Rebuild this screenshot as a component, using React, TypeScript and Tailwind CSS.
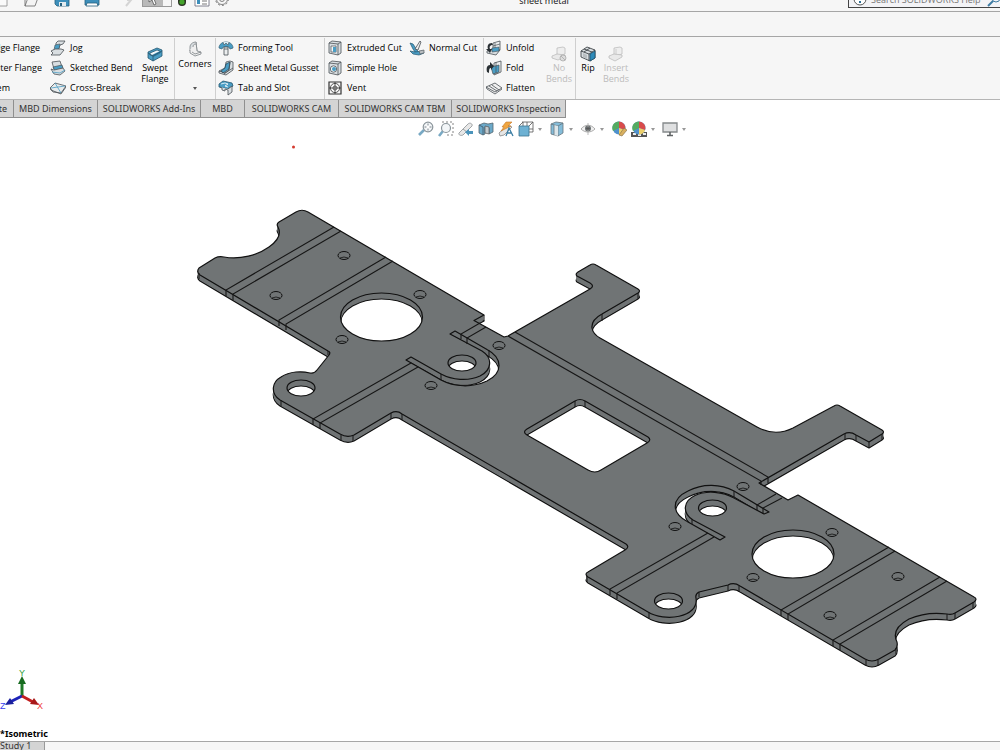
import React from "react";
import clsx from "clsx";

const K = "#4a5156";
const B = "#4a9dc4";
const L = "#d9dee1";
const G = "#b9bec1";

const icons: Record<string, React.ReactNode> = {
  jog: (
    <>
      <path d="M6 3l2-2h7l-2 3-3 1-1 3H5l1-3z" fill={L} stroke={K} />
      <path d="M5 5l5-1-1 5-5 1z" fill={B} stroke={K} strokeWidth=".6" />
      <path d="M1 11l4-2h6l3 1-4 5H1l2-2z" fill={L} stroke={K} />
    </>
  ),
  bend: (
    <>
      <path d="M2 2l8-1 2 6-8 2z" fill={L} stroke={K} />
      <path d="M3 7l9-2 1 3-8 3z" fill={B} stroke={K} strokeWidth=".7" />
      <path d="M1 9l3 1 9-2 2 3-5 4-6-1z" fill={L} stroke={K} />
      <path d="M2 12l8 1 5-3" fill="none" stroke={B} />
    </>
  ),
  cross: (
    <>
      <path d="M0 8l5-5 11 3-5 7-8-1z" fill="#e8ebec" stroke={K} />
      <path d="M1 8l14-2M5 3l6 10" fill="none" stroke={B} strokeWidth=".8" />
      <path d="M0 8l1 2 10 4 5-7V6" fill="none" stroke={K} />
    </>
  ),
  swept: (
    <>
      <path d="M1 6l9-4 5 2v6l-9 5-5-3z" fill={B} stroke="#23556e" />
      <path d="M3 7l7-3 3 1v2l-6 3-4-1z" fill="#f4f8fa" stroke="#23556e" strokeWidth=".8" />
      <path d="M5 9l8-4v2L7 10z" fill="#2f7ea6" />
      <path d="M1 7l5 3 9-5M6 10v5" fill="none" stroke="#23556e" strokeWidth=".8" />
    </>
  ),
  corners: (
    <>
      <path d="M3 6c0-3 3-5 6-5l1 9-4 2-3-2z" fill={L} stroke="#7b8185" />
      <path d="M9 1l1 9 4 1v2l-6 2-5-3v-3" fill="#efefef" stroke="#7b8185" />
      <path d="M6 6c0-2 1-3 3-3M5 11l3 2 6-2" fill="none" stroke="#7b8185" />
    </>
  ),
  forming: (
    <>
      <path d="M1 8c0-8 14-8 14 0l-3 1-1-2H5L4 9z" fill={B} stroke="#3d6a80" />
      <path d="M5 2l1 3 2-2 2 2 1-3" fill="#d9edf6" stroke={K} strokeWidth=".6" />
      <path d="M6 7h4v8H6z" fill="#eceeef" stroke={K} />
      <path d="M6 9h4" stroke={K} />
    </>
  ),
  gusset: (
    <>
      <path d="M8 2l4-1 3 1v8l-7 5-7-2v-2l6-3z" fill={L} stroke={K} />
      <path d="M8 4l4-2-1 7-6 4-2-2 4-3z" fill={B} stroke="#234b60" />
      <path d="M12 2l-1 8-5 4M1 11l6 2 8-5" fill="none" stroke={K} />
    </>
  ),
  tab: (
    <>
      <path d="M1 4l4-3 9 2 1 3-5 3-9-2z" fill={B} stroke="#23556e" />
      <path d="M2 7l2 1v2l3 1V9l3 1v5l4-3V6l-4 3" fill={L} stroke={K} />
      <path d="M3 4l4-1 3 1-3 2 3 1" fill="none" stroke="#fff" />
    </>
  ),
  extruded: (
    <>
      <path d="M2 3l3-2 9 1v11l-3 2-9-2z" fill={L} stroke={K} />
      <path d="M2 3l9 1v11M11 4l3-2" fill="none" stroke={K} />
      <path d="M4 6h5v6H4z" fill="#f3f6f7" stroke={K} strokeWidth=".7" />
      <path d="M6 7h3v5H6z" fill={B} />
    </>
  ),
  hole: (
    <>
      <path d="M2 3l3-2 9 1v11l-3 2-9-2z" fill={L} stroke={K} />
      <path d="M2 3l9 1v11M11 4l3-2" fill="none" stroke={K} />
      <circle cx="6.500" cy="9" r="3.200" fill="#f3f6f7" stroke={K} />
      <circle cx="7" cy="9" r="2" fill={B} />
    </>
  ),
  vent: (
    <>
      <path d="M2 2h12v12H2z" fill="#f8f8f8" stroke="#333" strokeWidth="1.200" />
      <circle cx="8" cy="8" r="4.600" fill="none" stroke="#333" />
      <circle cx="8" cy="8" r="2" fill="none" stroke="#333" strokeWidth=".7" />
      <path d="M8 2v12M2 8h12" stroke="#333" />
    </>
  ),
  normal: (
    <>
      <path d="M1 3l3 1 4 6 2 3-4-1-2-3z" fill={B} stroke="#23556e" strokeWidth=".7" />
      <path d="M1 11l5 1 8-1 1 2-5 2-6-1z" fill={B} stroke="#23556e" strokeWidth=".7" />
      <path d="M6 9l5-8 1 1-3 8z" fill="#eee" stroke={K} />
      <path d="M10 11l5-1v3l-4 1z" fill={G} stroke={K} strokeWidth=".6" />
    </>
  ),
  unfold: (
    <>
      <path d="M7 3l7-2v9l-7 2z" fill="#eceeef" stroke={K} />
      <path d="M9 3v7M7 6l7-2" stroke={K} strokeWidth=".7" />
      <path d="M1 11l5-2 8 1-4 5-9-2z" fill={L} stroke={K} />
      <path d="M6 8l7-1v4l-7 1z" fill={B} stroke={K} strokeWidth=".6" />
      <path d="M6 3C2 3 1 6 2 9H0l4 4 2-4H4c-1-2 0-4 3-4z" fill="#2a3034" />
    </>
  ),
  fold: (
    <>
      <path d="M8 3l7-2v11l-7 3z" fill="#eceeef" stroke={K} />
      <path d="M5 7l8-2v7l-6 2z" fill={B} stroke={K} strokeWidth=".7" />
      <path d="M10 2v12" stroke={K} strokeWidth=".7" />
      <path d="M1 12c-1-4 0-7 3-7V2l4 4-3 4V8c-2 0-2 2-2 5z" fill="#2a3034" />
    </>
  ),
  flatten: (
    <>
      <path d="M0 7l9-4 7 5-7 4z" fill="#efefef" stroke={K} />
      <path d="M3 6l8 5M6 5l7 5M0 7l1 2 8 5 7-5" fill="none" stroke={K} strokeWidth=".8" />
    </>
  ),
  nobends: (
    <>
      <path d="M6 2l6-1 2 1v6l-7 2-1-1z" fill="#eee" stroke="#bdbdbd" />
      <path d="M1 10l5-2 8 1v2l-7 3-6-2z" fill="#e9e9e9" stroke="#bdbdbd" />
      <circle cx="12" cy="12" r="3" fill="#ddd" stroke="#a9a9a9" />
      <path d="M10 10l4 4" stroke="#a9a9a9" />
    </>
  ),
  rip: (
    <>
      <path d="M1 5l6-4 8 3v8l-5 3-9-4z" fill={L} stroke="#2f3437" />
      <path d="M1 5l8 3 6-4M9 8v7M4 3l8 3M4 6l6-4" fill="none" stroke="#2f3437" />
      <path d="M10 8l5-3v7l-5 3z" fill="#2e8bba" stroke="#1d526d" />
      <path d="M3 7l4 2v4l-4-2z" fill={G} />
    </>
  ),
  insert: (
    <>
      <path d="M6 2l6-1 2 1v6l-7 2-1-1z" fill="#eee" stroke="#bdbdbd" />
      <path d="M1 10l5-2 8 1v2l-7 4-6-3z" fill="#e9e9e9" stroke="#bdbdbd" />
      <path d="M8 3v6" stroke="#c4c4c4" />
    </>
  ),
  zoomFit: (
    <>
      <path d="M1 14l5-5" stroke="#78a9c4" strokeWidth="2.600" />
      <circle cx="10" cy="6" r="4.800" fill="#f3f6f8" stroke="#8b959b" strokeWidth="1.200" />
      <path d="M10 2.500v7M6.500 6h7" stroke="#5e6a71" />
      <path d="M8.500 4.500h3v3h-3z" fill="#fff" />
    </>
  ),
  zoomArea: (
    <>
      <path d="M4 1h11v13H9" fill="none" stroke="#666" strokeDasharray="2 2" />
      <path d="M1 15l4-5" stroke="#78a9c4" strokeWidth="2.600" />
      <circle cx="8" cy="7" r="4.500" fill="#f3f6f8" stroke="#8b959b" strokeWidth="1.200" />
    </>
  ),
  previous: (
    <>
      <path d="M1 12l9-9c2-2 5 0 4 2l-9 9c-2 1-5 0-4-2z" fill="#e8e8e8" stroke="#8a8f92" />
      <path d="M5 8l4 3" stroke="#8a8f92" />
      <path d="M7 11l4-3v2h4v3h-4v2z" fill="#4b94bb" />
    </>
  ),
  section: (
    <>
      <path d="M1 4l5-2 4 1 5-1v9l-4 2V7L7 6v7l-2 1-4-2z" fill="#6ba9c9" stroke="#55666f" />
      <path d="M7 5l4 1v7l-4-1z" fill="#c3cbcf" stroke="#555" strokeWidth=".7" />
      <path d="M1 4l4 2v8" fill="none" stroke="#456" />
    </>
  ),
  dynamic: (
    <>
      <path d="M1 12l9-8 4 2-8 8-4 1z" fill="#e6e6e6" stroke="#888" />
      <path d="M8 1h6l-4 4h3L3 10l3-4H4z" fill="#f0a640" stroke="#c67a2e" strokeWidth=".6" />
      <path d="M8 15l3-8 4 8M9 12h4" fill="none" stroke="#3a7da3" strokeWidth="1.300" />
    </>
  ),
  orient: (
    <>
      <path d="M4 1h11v10h-4M1 5l4-4M11 5l4-4M9 1v5M5 1v4M11 8h4" fill="none" stroke="#555" />
      <path d="M1 5h10v10H1z" fill="#6db1d3" stroke="#3d7590" />
    </>
  ),
  display: (
    <>
      <path d="M2 3l5-2 7 1v10l-5 3-7-2z" fill="#84bcd9" stroke="#67747b" />
      <path d="M2 3l7 2 5-3M9 5v10" fill="none" stroke="#67747b" />
      <path d="M5 4v10l4 1V5z" fill="#dde6ea" />
      <path d="M5 4v10" stroke="#67747b" />
    </>
  ),
  eye: (
    <>
      <path d="M1 8c4-5 10-5 14 0-4 4-10 4-14 0z" fill="#f0f0f0" stroke="#999" />
      <circle cx="8" cy="7.500" r="3" fill="#6e7375" />
      <circle cx="8" cy="7.500" r="1.300" fill="#222" />
      <path d="M8 2v12" stroke="#aaa" strokeWidth=".8" />
    </>
  ),
  appearance: (
    <>
      <circle cx="8" cy="7" r="6.500" fill="#4f91cc" />
      <path d="M8 7V.500A6.500 6.500 0 0 1 14 9z" fill="#d94b4b" />
      <path d="M8 7L2 10A6.500 6.500 0 0 1 8 .500z" fill="#53ab61" />
      <path d="M8 7l6 2a6.500 6.500 0 0 1-6 5z" fill="#eed06b" />
      <path d="M8 14l5-7 3 2-5 6z" fill="#d9b060" stroke="#7d6944" strokeWidth=".6" />
    </>
  ),
  scene: (
    <>
      <path d="M0 11h16v5H0z" fill="#555" />
      <path d="M2 12h3v2H2zM7 13h3v2H7zM12 12h3v2h-3z" fill="#eee" />
      <circle cx="8" cy="7" r="6.500" fill="#4f91cc" />
      <path d="M8 7V.500A6.500 6.500 0 0 1 14 9z" fill="#d94b4b" />
      <path d="M8 7L2 10A6.500 6.500 0 0 1 8 .500z" fill="#53ab61" />
      <path d="M8 7l6 2a6.500 6.500 0 0 1-6 4.500z" fill="#eed06b" />
    </>
  ),
  monitor: (
    <>
      <path d="M1 2h14v9H1z" fill="#dfe0e1" stroke="#85898b" strokeWidth="1.300" />
      <path d="M8 11v3M5 14.500h6" stroke="#5f6365" strokeWidth="1.600" />
    </>
  ),
  newDoc: <path d="M1 1h12v14H1z" fill="#fafafa" stroke="#8c8c8c" />,
  open: <path d="M1 15L5 4h10l-4 11zM1 15V3" fill="#f4f4f4" stroke="#666" />,
  save: (
    <>
      <path d="M1 2h14v13H3l-2-2z" fill="#3d8fbb" stroke="#27607e" />
      <path d="M5 11h7v4H5z" fill="#e3ebef" />
      <path d="M6 12h2v3H6z" fill="#27607e" />
    </>
  ),
  print: (
    <>
      <path d="M1 6h14v8H1z" fill="#3d8fbb" stroke="#27607e" />
      <path d="M3 12h10l1 3H2z" fill="#fff" stroke="#27607e" />
    </>
  ),
  undo: <path d="M6 15l5-6H7" fill="none" stroke="#d4d4d4" strokeWidth="2" />,
  cursor: <path d="M4 1l8 8H9l2 5-2 1-2-5-3 2z" fill="#fff" stroke="#555" />,
  light: (
    <>
      <rect x="4" y="0" width="8" height="15" rx="4" fill="#2b3324" />
      <circle cx="8" cy="11" r="2.600" fill="#45a32b" />
    </>
  ),
  list: (
    <>
      <path d="M1 1h14v14H1z" fill="#fff" stroke="#667" />
      <path d="M3 9h3v4H3z" fill="#3d8fbb" />
      <path d="M8 10h5M8 13h5" stroke="#555" />
    </>
  ),
  gear: (
    <>
      <circle cx="8" cy="8" r="5.500" fill="#f6f6f6" stroke="#666" />
      <circle cx="8" cy="8" r="6.500" fill="none" stroke="#666" strokeDasharray="2 2" />
      <circle cx="8" cy="8" r="2.500" fill="none" stroke="#666" />
    </>
  ),
};

const Icon = ({ name }: { name: string }) => (
  <svg viewBox="0 0 16 16" className="w-4 h-4 shrink-0" strokeWidth=".8" aria-hidden="true">
    {icons[name]}
  </svg>
);

const Caret = () => (
  <svg viewBox="0 0 4 3" className="w-1 h-[3px] shrink-0" aria-hidden="true">
    <path d="M0 0h4L2 3z" fill="#555" />
  </svg>
);

const Tool = ({ icon, label }: { icon?: string; label: string }) => (
  <button className="flex items-center gap-1 h-5 whitespace-nowrap">
    {icon && <Icon name={icon} />}
    {label}
  </button>
);

const BigTool = ({ icon, lines, disabled }: { icon: string; lines: string[]; disabled?: boolean }) => (
  <button
    disabled={disabled}
    className={clsx("flex flex-col items-center pt-2 text-center leading-[11px]", disabled && "text-[#bcbcbc]")}
  >
    <Icon name={icon} />
    {lines.map((line) => (
      <span key={line}>{line}</span>
    ))}
  </button>
);

const Group = ({ className, children }: { className: string; children: React.ReactNode }) => (
  <div className={clsx("flex shrink-0 border-r border-[#cfcfcf]", className)}>{children}</div>
);

const TitleBar = () => (
  <header className="flex items-end h-3 shrink-0 overflow-hidden border-b border-[#a6a6a6] bg-[#f6f6f6]">
    <div className="flex items-end w-[240px] shrink-0 gap-3.5 pb-1 -ml-1.5">
      <button aria-label="New"><Icon name="newDoc" /></button>
      <button aria-label="Open"><Icon name="open" /></button>
      <button aria-label="Save"><Icon name="save" /></button>
      <button aria-label="Print"><Icon name="print" /></button>
      <button aria-label="Undo" className="ml-1.5"><Icon name="undo" /></button>
      <div className="flex -ml-2 border border-[#999]">
        <button aria-label="Select" className="flex justify-center w-5 bg-[#b9b9b9]">
          <Icon name="cursor" />
        </button>
        <button aria-label="Select options" className="w-2 bg-[#f6f6f6]" />
      </div>
      <button aria-label="Rebuild" className="-ml-3"><Icon name="light" /></button>
      <button aria-label="File properties" className="-ml-2.5"><Icon name="list" /></button>
      <button aria-label="Options" className="-ml-2.5"><Icon name="gear" /></button>
    </div>
    <h1 className="flex-1 text-center pl-1.5 pb-1 leading-[12px] text-[#222]">sheet metal</h1>
    <div className="flex items-center w-[152px] h-4 mb-[3px] gap-1 pl-1 border border-r-0 border-[#444] bg-[#f3f3f6]">
      <svg viewBox="0 0 14 14" className="w-3.5 h-3.5 shrink-0" aria-hidden="true">
        <circle cx="7" cy="6" r="6" fill="#fff" stroke="#555" />
        <path d="M7 3v3M7 8v2" stroke="#2f6f96" strokeWidth="2" />
      </svg>
      <input
        aria-label="Search SOLIDWORKS Help"
        placeholder="Search SOLIDWORKS Help"
        className="w-28 bg-transparent outline-none font-['Open_Sans',sans-serif] placeholder:text-[#777]"
      />
      <svg viewBox="0 0 14 14" className="w-3.5 h-3.5 shrink-0" aria-hidden="true">
        <path d="M1 13l5-5" stroke="#3f7ca3" strokeWidth="2" />
        <circle cx="9" cy="5" r="4" fill="none" stroke="#3f7ca3" />
      </svg>
    </div>
  </header>
);

const Ribbon = () => (
  <nav className="flex h-[63px] shrink-0 pt-px overflow-hidden border-b border-[#b5b5b5] bg-[#f6f6f6] text-black font-['Open_Sans',sans-serif]">
    <Group className="w-[175px]">
      <div className="flex justify-end w-[42px] overflow-hidden">
        <div className="flex flex-col shrink-0">
          <Tool label="Edge Flange" />
          <Tool label="Miter Flange" />
          <Tool label="Hem" />
        </div>
      </div>
      <div className="flex flex-col w-[98px] pl-2">
        <Tool icon="jog" label="Jog" />
        <Tool icon="bend" label="Sketched Bend" />
        <Tool icon="cross" label="Cross-Break" />
      </div>
      <div className="w-[30px] flex justify-center items-start">
        <BigTool icon="swept" lines={["Swept", "Flange"]} />
      </div>
    </Group>
    <Group className="w-[41px] justify-center">
      <button className="flex flex-col items-center gap-0.5 pt-[3px] leading-[10px]">
        <Icon name="corners" />
        Corners
        <span className="pt-4"><Caret /></span>
      </button>
    </Group>
    <Group className="w-[109px] pl-0.5">
      <div className="flex flex-col">
        <Tool icon="forming" label="Forming Tool" />
        <Tool icon="gusset" label="Sheet Metal Gusset" />
        <Tool icon="tab" label="Tab and Slot" />
      </div>
    </Group>
    <Group className="w-[159px] pl-0.5">
      <div className="flex flex-col w-[82px]">
        <Tool icon="extruded" label="Extruded Cut" />
        <Tool icon="hole" label="Simple Hole" />
        <Tool icon="vent" label="Vent" />
      </div>
      <div>
        <Tool icon="normal" label="Normal Cut" />
      </div>
    </Group>
    <Group className="w-[92px] pl-0.5">
      <div className="flex flex-col w-[57px]">
        <Tool icon="unfold" label="Unfold" />
        <Tool icon="fold" label="Fold" />
        <Tool icon="flatten" label="Flatten" />
      </div>
      <div className="flex-1 flex justify-center items-start">
        <BigTool icon="nobends" lines={["No", "Bends"]} disabled />
      </div>
    </Group>
    <div className="flex items-start">
      <div className="w-6 flex justify-center">
        <BigTool icon="rip" lines={["Rip"]} />
      </div>
      <div className="w-8 flex justify-center">
        <BigTool icon="insert" lines={["Insert", "Bends"]} disabled />
      </div>
    </div>
  </nav>
);

const tabs = [
  { label: "MBD Dimensions", width: "w-[84px]" },
  { label: "SOLIDWORKS Add-Ins", width: "w-[103px]" },
  { label: "MBD", width: "w-[44px]" },
  { label: "SOLIDWORKS CAM", width: "w-[94px]" },
  { label: "SOLIDWORKS CAM TBM", width: "w-[113px]" },
  { label: "SOLIDWORKS Inspection", width: "w-[114px]" },
];

const tabClass =
  "flex shrink-0 items-center h-[18px] border-r border-b border-[#8f8f8f] bg-[#d4d4d4] text-[#333] whitespace-nowrap";

const CommandTabs = () => (
  <div className="flex shrink-0">
    <button className={clsx(tabClass, "w-3.5 justify-end pr-1.5 overflow-hidden")}>Evaluate</button>
    {tabs.map((tab) => (
      <button key={tab.label} className={clsx(tabClass, "justify-center", tab.width)}>
        {tab.label}
      </button>
    ))}
  </div>
);

const viewTools = [
  { name: "zoomFit", label: "Zoom to Fit" },
  { name: "zoomArea", label: "Zoom to Area" },
  { name: "previous", label: "Previous View" },
  { name: "section", label: "Section View" },
  { name: "dynamic", label: "Dynamic Annotation Views" },
  { name: "orient", label: "View Orientation", menu: true },
  { name: "display", label: "Display Style", menu: true },
  { name: "eye", label: "Hide/Show Items", menu: true },
  { name: "appearance", label: "Edit Appearance" },
  { name: "scene", label: "Apply Scene", menu: true },
  { name: "monitor", label: "View Settings", menu: true },
];

const ViewToolbar = () => (
  <div className="flex shrink-0 justify-center gap-1 pt-[3px] pl-[107px]">
    {viewTools.map((tool) => (
      <button key={tool.name} aria-label={tool.label} className="flex items-center h-4">
        <Icon name={tool.name} />
        {tool.menu && (
          <span className="pl-1 pr-[3px] opacity-60"><Caret /></span>
        )}
      </button>
    ))}
  </div>
);

const ellipse = (cx: number, cy: number, rx: number, ry: number) =>
  `M${cx - rx} ${cy}a${rx} ${ry} 0 1 0 ${2 * rx} 0a${rx} ${ry} 0 1 0 ${-2 * rx} 0Z`;

// top face of the flattened part, outline first and cut-outs after it
const plate = [
  "M199 268L215 258Q219 256 224 257C240 260 258 255 269 247C279 240 281 233 278 227Q276 224 279 222L296 212Q302 208.500 308 212L484 315L474 320.500L504 337L508 336L590 289Q595 286 590 283L577 276Q575 274 578 272L590 265Q593 263 596 265L638 289Q641 291 638 293L602 314Q591 320 592 328Q593 334 600 338L757 427Q775 437 793 428L834 406Q837 404 840 406L882 430Q885 432 882 434L869 442L856 435Q850 431 844 434L759 483L788 500L798 495L974 597Q978 599 974 602L955 613Q952 615 947 614C932 612 918 615 909 619C896 626 893 634 897 642Q898 647 895 650L879 659Q872 663 865 659L740 586Q734 582 728 585L699 592Q695 594 696 598C699 618 664 622 648 612L588 577Q584 574 588 572L625 550Q630 547 626 544L402 414Q397 410 391 413L354 435Q347 438 340 434L280 400C270 393 272 382 281 377C290 371 302 371 310 373Q314 374 317 370L329 355Q331 352 328 351L200 275Q196 272 199 268Z",
  "M575 401Q580 398 585 401L648 437Q652 440 647 443L601 470Q595 474 588 470L527 435Q522 432 527 429Z",
  "M406 360L411 357L441 374C452 380 468 381.500 480 376C492 370 493 358 482 351L450 334L455 331L487 349.500C503 358 503 373 487 381C472 388 454 387 441 380Z",
  "M769 512L764 514L734 498C723 492 707 490 695 495.500C683 501 682 513 693 520L725 537L720 540L688 522C671 513 671 499 688 491C703 483 721 484 734 491Z",
  ellipse(381.5, 317, 41, 24),
  ellipse(793, 554, 41, 24),
  ellipse(462, 363, 14, 8),
  ellipse(712.5, 508, 14, 8),
  ellipse(301, 388, 14, 8),
  ellipse(668.5, 601, 14, 8),
].join("");

const bends =
  "M334 227L226 290v6M341 231L233 294v6M386 257L279 320v6M393 261L286 324v6" +
  "M411 363L313 419v6M418 367L320 423v6M480 323L461 334v5M486 327L467 338v6" +
  "M889 547L781 610v6M895 551L788 614v6M940 577L833 640v6M947 581L840 644v6" +
  "M708 533L610 589v6M714 537L617 593v6M776 494L757 505v5M782 498L763 508v6" +
  "M515 332L768 477v6M508 336L761 481v4";

const edges =
  "M199 273v6M281 400v6M341 435v6M353 435v6M391 413v6M402 414v6M484 315v6M638 293v6M602 314v7M869 442v6" +
  "M845 434v6M856 435v6M882 434v6M866 660v6M878 660v6M896 648v6M947 614v6M955 613v6M973 602v6M728 585v6" +
  "M739 586v6M699 592v5M649 612v6M587 576v6M441 374v6M489 350v7M734 491v6M692 519v5M575 401v6M585 401v6M328 351v4";

const smallHoles = [
  [344, 255], [276, 295], [420, 294], [342, 339], [499, 345], [431, 385],
  [743, 486], [675, 526], [832, 532], [753, 577], [898, 576], [830, 615],
];

const Model = () => (
  <svg viewBox="0 137 1000 604" className="w-full flex-1 min-h-0" role="img" aria-label="Sheet metal part, isometric view">
    <circle cx="293.500" cy="147" r="1.500" fill="#d43a2f" />
    <g fill="#707475" fillRule="evenodd" strokeLinejoin="round">
      <path d={plate} transform="translate(0 6)" stroke="#111" strokeWidth="1.200" />
      {[5, 4, 3, 2, 1].map((dy) => (
        <path key={dy} d={plate} transform={`translate(0 ${dy})`} />
      ))}
      <path d={plate} stroke="#111" strokeWidth="1.200" />
    </g>
    <path d={bends} fill="none" stroke="#161616" strokeWidth="1.100" />
    <path d={edges} fill="none" stroke="#161616" />
    {smallHoles.map(([x, y]) => (
      <g key={`${x}-${y}`} stroke="#111" fill="#707475">
        <ellipse cx={x} cy={y + 0.5} rx="6" ry="4" />
        <path d={`M${x - 4} ${y + 3}q4 -2 8 0`} strokeWidth=".8" />
      </g>
    ))}
  </svg>
);

const Triad = () => (
  <svg viewBox="0 0 48 48" className="w-12 h-12" aria-hidden="true">
    <g fontFamily="Liberation Sans, sans-serif" fontSize="9">
      <path d="M22 29V15" stroke="#1f7a28" strokeWidth="3" />
      <path d="M18 17l4-8 4 8z" fill="#176b20" />
      <path d="M22 29l-12 6" stroke="#1c22b8" strokeWidth="3" />
      <path d="M5 38l5-7 4 6z" fill="#1a1f9c" />
      <path d="M22 29l11 6" stroke="#c21f1f" strokeWidth="3" />
      <path d="M39 38l-9-1 4-6z" fill="#a81818" />
      <text x="19" y="9" fill="#2f9e3a">Y</text>
      <text x="0" y="42" fill="#3a3ff0">Z</text>
      <text x="37" y="42" fill="#f03a3a">X</text>
    </g>
  </svg>
);

export default function App() {
  return (
    <div className="flex flex-col h-screen overflow-hidden bg-white text-[9px] font-['Noto_Sans','Open_Sans',sans-serif]">
      <TitleBar />
      <div className="h-[25px] shrink-0 border-b border-[#a6a6a6] bg-[#f6f6f6]" />
      <Ribbon />
      <CommandTabs />
      <main className="relative flex flex-col flex-1 min-h-0">
        <ViewToolbar />
        <Model />
        <div className="absolute left-0 bottom-0">
          <Triad />
          <p className="pt-3 leading-[14px] font-bold text-black">*Isometric</p>
        </div>
      </main>
      <footer className="flex h-[9px] shrink-0 overflow-hidden border-t border-[#a6a6a6] bg-[#f6f6f6]">
        <button className="w-[45px] h-2 shrink-0 border-r border-[#999] bg-[#d4d4d4] text-left leading-[8px] text-[#333]">
          Study 1
        </button>
      </footer>
    </div>
  );
}
